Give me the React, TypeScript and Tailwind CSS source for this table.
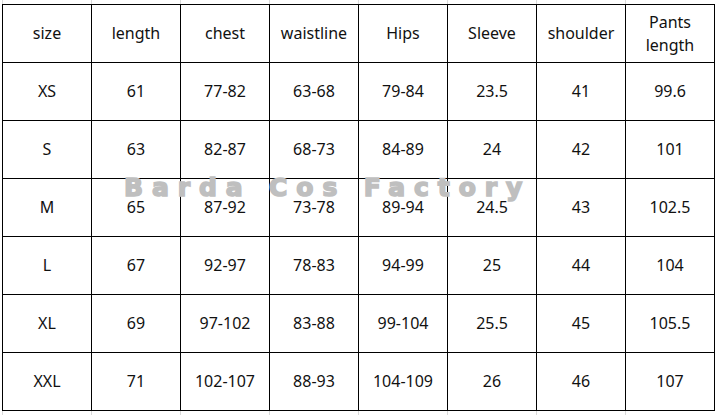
import React from "react";

const headers = ["size", "length", "chest", "waistline", "Hips", "Sleeve", "shoulder", "Pants length"];

const rows = [
  ["XS", "61", "77-82", "63-68", "79-84", "23.5", "41", "99.6"],
  ["S", "63", "82-87", "68-73", "84-89", "24", "42", "101"],
  ["M", "65", "87-92", "73-78", "89-94", "24.5", "43", "102.5"],
  ["L", "67", "92-97", "78-83", "94-99", "25", "44", "104"],
  ["XL", "69", "97-102", "83-88", "99-104", "25.5", "45", "105.5"],
  ["XXL", "71", "102-107", "88-93", "104-109", "26", "46", "107"],
];

// faint spreadsheet gridlines peeking out above / below the table
const GridStrip = ({ h }: { h: string }) => (
  <div className={`grid grid-cols-[repeat(8,89px)] pl-[2px] ${h}`}>
    {headers.map((_, i) => (
      <div key={i} className="border-l border-[#d9d9d9]" />
    ))}
  </div>
);

const Cell = ({ children }: { children: React.ReactNode }) => (
  <div className="h-[58px] flex items-center justify-center text-center border-r border-b border-black leading-[23px]">
    {children}
  </div>
);

export default function App() {
  return (
    <div
      className="relative w-[717px] h-[415px] bg-white text-base text-[#111] overflow-hidden"
      style={{ fontFamily: '"Noto Sans", "Open Sans", sans-serif' }}
    >
      <GridStrip h="h-[4px]" />

      <div className="ml-[2px] w-fit grid grid-cols-[repeat(8,89px)] border-l border-t border-black">
        {headers.map((h) => (
          <Cell key={h}>
            {h === "Pants length" ? (
              <span>
                Pants
                <br />
                length
              </span>
            ) : (
              h
            )}
          </Cell>
        ))}
        {rows.map((r) => r.map((v, i) => <Cell key={r[0] + i}>{v}</Cell>))}
      </div>

      <GridStrip h="h-[5px]" />

      {/* watermark, heavy weight faked with a stroke */}
      <div className="absolute left-[124px] top-[178px] pointer-events-none select-none">
        <span
          className="block text-[25px] font-bold leading-[20px] tracking-[8.9px] text-[#bfbfbf] whitespace-pre [-webkit-text-stroke:1.6px_#bfbfbf]"
          style={{ fontFamily: '"DejaVu Sans", "Liberation Sans", sans-serif' }}
        >
          Barda Cos Factory
        </span>
      </div>
    </div>
  );
}
